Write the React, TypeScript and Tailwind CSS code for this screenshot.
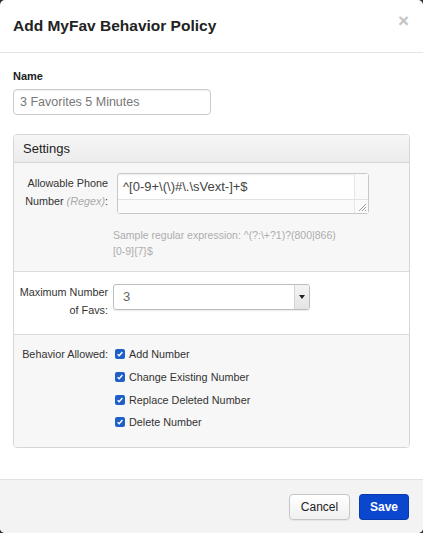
import React from 'react'

function Check({ label }: { label: string }) {
    return (
        <div className="flex h-[22.67px] items-center">
            <span className="flex h-[10px] w-[10px] items-center justify-center rounded-[2px] bg-[#1f5fc9]">
                <svg width="8" height="8" viewBox="0 0 8 8">
                    <path d="M1.6 4.2 L3.2 5.8 L6.4 2" fill="none" stroke="#fff" strokeWidth="1.4" />
                </svg>
            </span>
            <span className="ml-[4px] text-[10.8px] text-[#333]">{label}</span>
        </div>
    )
}

export default function App() {
    return (
        <div className="h-[533px] w-[423px] bg-[#2a2a2a] font-['Liberation_Sans',Arial,sans-serif]">
            <div className="flex h-full flex-col overflow-hidden rounded-[5px] bg-white">
                {/* HEADER */}
                <div className="flex h-[53px] items-center justify-between border-b border-[#e5e5e5] pl-[13px] pr-[14px]">
                    <h3 className="text-[15.5px] font-bold text-[#222]">Add MyFav Behavior Policy</h3>
                    <span className="-mt-[12px] text-[19px] font-bold leading-none text-[#c4c4c4]">×</span>
                </div>

                {/* BODY */}
                <div className="px-[13px] pt-[15px]">
                    <label className="block text-[11px] font-bold leading-[16px] text-[#222]">Name</label>
                    <div className="mt-[5px] flex h-[26px] w-[198px] items-center rounded-[4px] border border-[#ccc] pl-[6px] text-[12.5px] text-[#777] shadow-[inset_0_1px_1px_rgba(0,0,0,0.06)]">
                        3 Favorites 5 Minutes
                    </div>

                    {/* SETTINGS PANEL */}
                    <div className="mt-[19px] overflow-hidden rounded-[4px] border border-[#d6d6d6]">
                        <div className="flex h-[28px] items-center border-b border-[#d6d6d6] bg-gradient-to-b from-[#f6f6f6] to-[#ececec] pl-[9px] text-[13px] text-[#222]">
                            Settings
                        </div>

                        {/* phone regex */}
                        <div className="flex border-b border-[#dcdcdc] bg-[#f7f7f7] pb-[12px] pt-[10px]">
                            <div className="w-[94px] pt-[1px] text-right text-[10.8px] leading-[18px] text-[#333]">
                                Allowable Phone
                                <br />
                                Number <i className="text-[#aaa]">(Regex)</i>:
                            </div>
                            <div className="ml-[5px] flex-1">
                                <div className="ml-[4px] flex h-[41px] w-[252px] flex-col rounded-[3px] border border-[#c8c8c8] bg-white shadow-[inset_0_1px_2px_rgba(0,0,0,0.08)]">
                                    <div className="flex flex-1">
                                        <div className="flex-1 pl-[5px] pt-[5px] text-[13px] leading-[16px] text-[#444]">
                                            ^[0-9+\(\)#\.\sVext-]+$
                                        </div>
                                        <div className="w-[14px] border-l border-[#e6e6e6] bg-[#fafafa]" />
                                    </div>
                                    <div className="flex h-[14px] border-t border-[#e2e2e2] bg-[#fafafa]">
                                        <div className="flex-1" />
                                        <div className="flex w-[14px] items-end justify-end border-l border-[#e6e6e6] pb-[1px] pr-[1px]">
                                            <svg width="10" height="10" viewBox="0 0 10 10">
                                                <path d="M9 2 L2 9 M9 5 L5 9 M9 8 L8 9" stroke="#999" strokeWidth="1" />
                                            </svg>
                                        </div>
                                    </div>
                                </div>
                                <p className="mt-[13px] text-[10.5px] leading-[16px] text-[#adadad]">
                                    Sample regular expression: ^(?:\+?1)?(800|866)
                                    <br />
                                    [0-9]{'{7}'}$
                                </p>
                            </div>
                        </div>

                        {/* max favs */}
                        <div className="flex border-b border-[#dcdcdc] bg-white pb-[15px] pt-[11px]">
                            <div className="w-[94px] text-right text-[10.8px] leading-[18px] text-[#333]">
                                Maximum Number
                                <br />
                                of Favs:
                            </div>
                            <div className="ml-[5px] mt-[1px] flex h-[26px] w-[197px] overflow-hidden rounded-[3px] border border-[#bdbdbd] shadow-[0_1px_1px_rgba(0,0,0,0.08)]">
                                <div className="flex flex-1 items-center pl-[9px] text-[13px] text-[#666]">3</div>
                                <div className="flex w-[15px] items-center justify-center border-l border-[#d4d4d4] bg-gradient-to-b from-[#f4f4f4] to-[#e4e4e4]">
                                    <svg width="6" height="4" viewBox="0 0 6 4">
                                        <path d="M0 0 L6 0 L3 4 Z" fill="#222" />
                                    </svg>
                                </div>
                            </div>
                        </div>

                        {/* behavior */}
                        <div className="flex bg-[#f7f7f7] pb-[13px] pt-[8px]">
                            <div className="flex h-[22.67px] w-[94px] items-center justify-end text-[10.8px] text-[#333]">
                                Behavior Allowed:
                            </div>
                            <div className="ml-[7px]">
                                <Check label="Add Number" />
                                <Check label="Change Existing Number" />
                                <Check label="Replace Deleted Number" />
                                <Check label="Delete Number" />
                            </div>
                        </div>
                    </div>
                </div>

                {/* FOOTER */}
                <div className="mt-auto flex h-[54px] items-start justify-end gap-[9px] border-t border-[#e2e2e2] bg-[#f3f3f3] pr-[14px] pt-[14px]">
                    <button className="h-[26px] w-[61px] rounded-[4px] border border-[#c6c6c6] bg-gradient-to-b from-white to-[#f0f0f0] text-[12px] text-[#222] shadow-[0_1px_1px_rgba(0,0,0,0.06)]">
                        Cancel
                    </button>
                    <button className="h-[26px] w-[50px] rounded-[4px] border border-dotted border-[#0a2f8a] bg-[#0b46cf] text-[12px] font-bold text-white">
                        Save
                    </button>
                </div>
            </div>
        </div>
    )
}
